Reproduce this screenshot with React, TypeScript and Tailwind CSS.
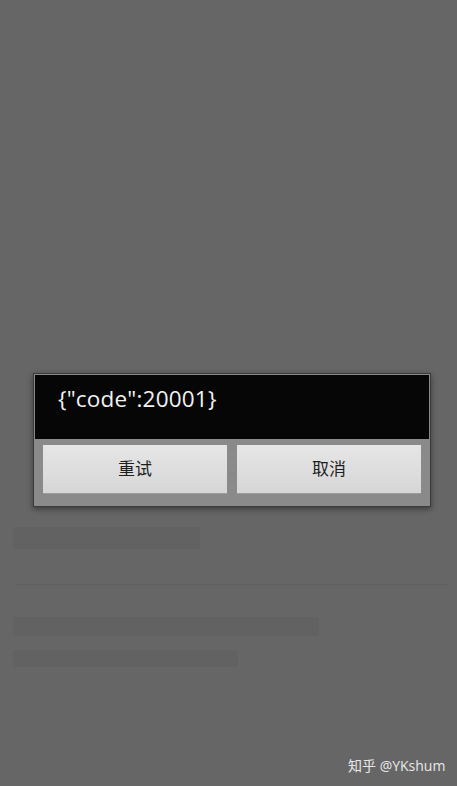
export default function App() {
  return (
    <div className="relative min-h-[786px] w-full overflow-hidden bg-[#666666] font-['Open_Sans','Noto_Sans_CJK_SC',sans-serif]">
      {/* dimmed page underneath */}
      <div className="flex flex-col px-[13px] pt-[527px]">
        <div className="h-[22px] w-[187px] bg-[#626262]" />
        <div className="mt-[35px] ml-[2px] h-px w-[433px] bg-[#606060]" />
        <div className="mt-[32px] h-[19px] w-[306px] bg-[#626262]" />
        <div className="mt-[14px] h-[17px] w-[225px] bg-[#626262]" />
      </div>

      {/* dialog */}
      <div className="absolute left-[33px] top-[373px] w-[398px] border border-[#3a3a3a] bg-[#8a8a8a] p-px shadow-[0_2px_6px_rgba(0,0,0,0.45)]">
        <div className="flex h-[64px] items-start bg-[#060606] pl-[23px] pt-[7px] text-[22.5px] tracking-[0.2px] text-[#f2f2f2]">
          {'{"code":20001}'}
        </div>
        <div className="flex gap-[10px] px-[8px] pb-[11px] pt-[6px]">
          <button className="flex h-[49px] flex-1 items-center justify-center border-b border-[#9c9c9c] bg-gradient-to-b from-[#e6e6e6] to-[#d6d6d6] text-[17px] text-[#1e1e1e]">
            重试
          </button>
          <button className="flex h-[49px] flex-1 items-center justify-center border-b border-[#9c9c9c] bg-gradient-to-b from-[#e6e6e6] to-[#d6d6d6] text-[17px] text-[#1e1e1e]">
            取消
          </button>
        </div>
      </div>

      {/* watermark */}
      <div className="absolute left-[348px] top-[755px] text-[14px] text-[#e8e8e8]">
        知乎 @YKshum
      </div>
    </div>
  );
}
